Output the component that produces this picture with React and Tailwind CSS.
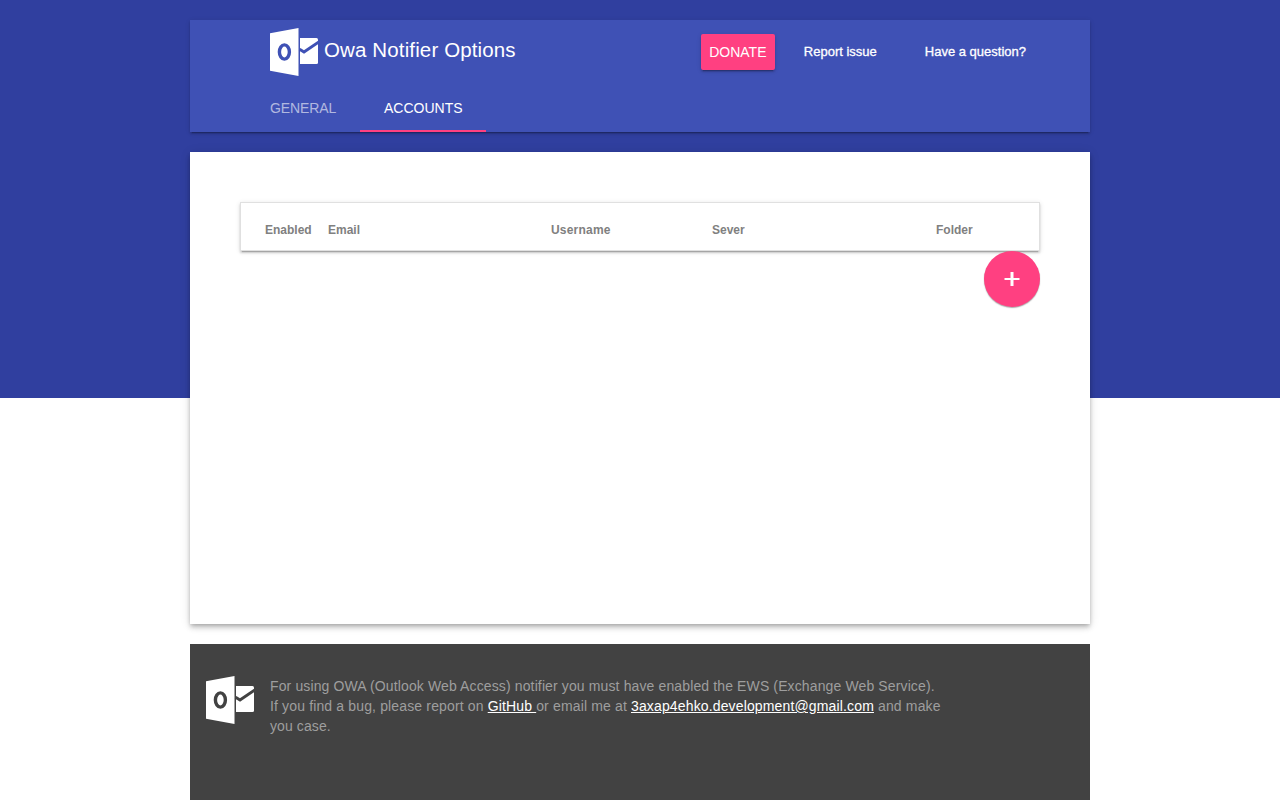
function Logo({ cut }) {
  return (
    <svg className="block h-12 w-12 shrink-0" viewBox="0 0 48 48" aria-hidden="true">
      <path fill="#fff" d="M0 5.2 28.5 0v48L0 42.7z" />
      <path fill="#fff" d="M30 10h16.5a1.5 1.5 0 0 1 1.5 1.5v23a1.5 1.5 0 0 1-1.5 1.5H30z" />
      <path fill="none" stroke={cut} strokeWidth="3" d="m29.6 21.3 4.4 2.7L49 13.8" />
      <ellipse cx="14.4" cy="24" rx="5" ry="7.1" fill="none" stroke={cut} strokeWidth="3.4" />
    </svg>
  );
}

const columns = [
  { label: 'Enabled', width: 'w-[63px]' },
  { label: 'Email', width: 'w-[223px]' },
  { label: 'Username', width: 'w-[161px] tracking-[0.2px]' },
  { label: 'Sever', width: 'w-[224px]' },
  { label: 'Folder', width: 'w-[80px]' },
];

export default function App() {
  return (
    <div className="h-screen overflow-hidden bg-white bg-[linear-gradient(#303f9f,#303f9f)] bg-[length:100%_398px] bg-no-repeat font-['Liberation_Sans',Arial,sans-serif] text-sm">
      <div className="mx-auto flex h-full w-[900px] flex-col gap-5 pt-5">
        <header className="h-28 shrink-0 bg-[#3f51b5] text-white shadow-[0_2px_2px_0_rgba(0,0,0,0.14),0_3px_1px_-2px_rgba(0,0,0,0.2),0_1px_5px_0_rgba(0,0,0,0.12)]">
          <div className="flex h-16 items-center pl-20">
            <Logo cut="#3f51b5" />
            <h1 className="ml-1.5 pb-1 text-[20.5px] leading-none tracking-[0.13px]">Owa Notifier Options</h1>
            <nav className="mr-10 ml-auto flex items-center text-[13px]">
              <button className="mr-[5px] h-9 w-[74px] rounded-xs bg-[#ff4081] text-sm shadow-[0_2px_2px_0_rgba(0,0,0,0.14),0_3px_1px_-2px_rgba(0,0,0,0.2),0_1px_5px_0_rgba(0,0,0,0.12)]">DONATE</button>
              <a href="#" className="px-6 [-webkit-text-stroke:0.3px_white]">Report issue</a>
              <a href="#" className="px-6 [-webkit-text-stroke:0.3px_white]">Have a question?</a>
            </nav>
          </div>
          <div className="flex h-12 pl-14 leading-[48px]">
            <a href="#" className="w-[114px] pl-6 tracking-[-0.1px] text-white/60">GENERAL</a>
            <a href="#" className="w-[126px] border-b-2 border-[#ff4081] pl-6">ACCOUNTS</a>
          </div>
        </header>

        <main className="flex h-[472px] shrink-0 flex-col bg-white p-[50px] shadow-[0_4px_5px_0_rgba(0,0,0,0.14),0_1px_10px_0_rgba(0,0,0,0.12),0_2px_4px_-1px_rgba(0,0,0,0.2)]">
          <div className="flex h-[49px] shrink-0 items-end border border-black/12 pb-3 pl-6 text-xs font-bold text-[#808080] shadow-[0_2px_2px_0_rgba(0,0,0,0.14),0_3px_1px_-2px_rgba(0,0,0,0.2),0_1px_5px_0_rgba(0,0,0,0.12)]">
            {columns.map((column) => (
              <div key={column.label} className={column.width}>{column.label}</div>
            ))}
          </div>
          <button aria-label="Add account" className="z-10 flex h-14 w-14 shrink-0 items-center justify-center self-end rounded-full bg-[#ff4081] shadow-[0_1px_1.5px_0_rgba(0,0,0,0.12),0_1px_1px_0_rgba(0,0,0,0.24)]">
            <svg className="h-6 w-6" viewBox="0 0 24 24" fill="#fff">
              <path d="M4.5 11h6V5h3v6h6v2h-6v6h-3v-6h-6z" />
            </svg>
          </button>
        </main>

        <footer className="flex flex-1 items-start gap-4 bg-[#424242] px-4 pt-8 leading-5 text-[#9e9e9e]">
          <Logo cut="#424242" />
          <p>
            <span className="tracking-[0.125px]">For using OWA (Outlook Web Access) notifier you must have enabled the EWS (Exchange Web Service).</span>
            <br />
            <span className="tracking-[0.145px]">
              If you find a bug, please report on <a href="#" className="whitespace-pre text-white underline">{'GitHub '}</a>or email me at{' '}
              <a href="#" className="text-white underline">3axap4ehko.development@gmail.com</a> and make
            </span>
            <br />
            <span className="tracking-[0.1px]">you case.</span>
          </p>
        </footer>
      </div>
    </div>
  );
}
